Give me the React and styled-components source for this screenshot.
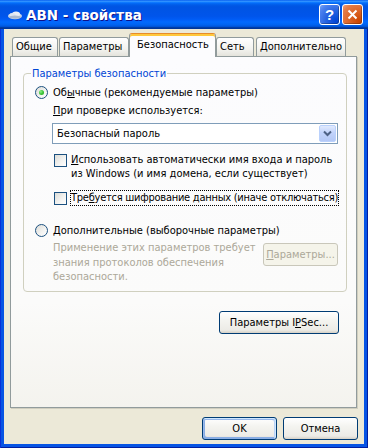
import React from 'react';
import styled, { createGlobalStyle } from 'styled-components';

const GlobalStyle = createGlobalStyle`
  html, body {
    margin: 0;
    padding: 0;
  }
  body {
    font-family: 'DejaVu Sans Condensed', 'DejaVu Sans', Tahoma, sans-serif;
    font-stretch: condensed;
    font-size: 11px;
    color: #000;
  }
`;

const Window = styled.div`
  width: 368px;
  height: 448px;
  display: flex;
  flex-direction: column;
  background: #0754e4;
  box-shadow: inset 1px 0 #0831d9, inset -1px 0 #001ea0, inset 0 -1px #001ea0;
`;

const TitleBar = styled.div`
  height: 29px;
  flex: none;
  display: flex;
  align-items: center;
  padding: 0 5px 0 7px;
  background: linear-gradient(
    180deg,
    #0058ee 0%,
    #3593ff 4%,
    #288eff 6%,
    #127dff 8%,
    #036ffc 10%,
    #0262ee 14%,
    #0057e5 20%,
    #0054e3 24%,
    #0055eb 56%,
    #005bf5 66%,
    #026afe 76%,
    #0062ef 86%,
    #0052d6 92%,
    #0040ab 94%,
    #003092 100%
  );
`;

const TitleText = styled.span`
  flex: 1;
  margin-left: 3px;
  font-family: 'DejaVu Sans', sans-serif;
  font-stretch: normal;
  font-weight: bold;
  font-size: 13.5px;
  color: #fff;
  text-shadow: 1px 1px #0f1089;
`;

const TitleButton = styled.div`
  width: 21px;
  height: 21px;
  box-sizing: border-box;
  margin-left: 2px;
  border: 1px solid #fff;
  border-radius: 3px;
  display: flex;
  align-items: center;
  justify-content: center;
  color: #fff;
  font-family: 'Liberation Sans', Arial, sans-serif;
  font-weight: bold;
  font-size: 15px;
  background: ${p =>
    p.$close
      ? 'radial-gradient(circle at 85% 85%, #cc4600 0%, #dc6527 45%, #e37d4a 80%, #f0a080 100%)'
      : 'radial-gradient(circle at 85% 85%, #0044d6 0%, #2663e0 45%, #4d82ef 80%, #7aa7f8 100%)'};
  box-shadow: inset -1px -1px rgba(0, 0, 0, 0.25);
`;

const Body = styled.div`
  flex: 1;
  display: flex;
  flex-direction: column;
  margin: 0 4px 4px;
  padding: 4px 7px 4px 6px;
  background: #ece9d8;
`;

const TabStrip = styled.div`
  display: flex;
  align-items: flex-end;
  height: 24px;
  padding-left: 2px;
  margin-bottom: -1px;
  position: relative;
  z-index: 1;
`;

const Tab = styled.div`
  box-sizing: border-box;
  width: ${p => p.$w}px;
  height: ${p => (p.$active ? 24 : 19)}px;
  margin-right: ${p => p.$gap}px;
  margin-bottom: ${p => (p.$active ? 0 : 1)}px;
  padding: ${p => (p.$active ? '4px 0 0 7px' : '2px 0 0 3px')};
  border: 1px solid #919b9c;
  border-bottom: none;
  border-radius: 3px 3px 0 0;
  white-space: nowrap;
  background: ${p =>
    p.$active ? '#fcfcfe' : 'linear-gradient(180deg, #ffffff 0%, #f3f3ef 60%, #e4e3dc 100%)'};
  ${p =>
    p.$active &&
    `
    border-top-color: #e68b2c;
    box-shadow: inset 0 2px #ffc83c;
  `}
`;

const Panel = styled.div`
  flex: none;
  height: 352px;
  box-sizing: border-box;
  border: 1px solid #919b9c;
  background: linear-gradient(180deg, #fcfcfe 0%, #fbfbfa 70%, #f4f3ee 100%);
  box-shadow: 1px 1px #d0cebf;
  display: flex;
  flex-direction: column;
  padding: 10px 9px 0 12px;
`;

const GroupBox = styled.fieldset`
  margin: 0;
  min-width: 0;
  height: 225px;
  box-sizing: border-box;
  border: 1px solid #d0d0bf;
  border-radius: 4px;
  padding: 2px 8px 0 11px;
  display: flex;
  flex-direction: column;

  legend {
    color: #0046d5;
    padding: 0 1px;
    margin-left: -4px;
    line-height: 13px;
  }
`;

const RadioRow = styled.label`
  display: flex;
  align-items: center;
  gap: 5px;
  height: 16px;
  margin-top: ${p => p.$top}px;
  white-space: nowrap;
`;

const Radio = styled.span`
  width: 13px;
  height: 13px;
  box-sizing: border-box;
  flex: none;
  border: 1px solid #1c5180;
  border-radius: 50%;
  background: linear-gradient(135deg, #dcdcd7 0%, #f4f4f2 60%, #ffffff 100%);
  display: flex;
  align-items: center;
  justify-content: center;

  &::after {
    content: '';
    display: ${p => (p.$checked ? 'block' : 'none')};
    width: 5px;
    height: 5px;
    border-radius: 50%;
    background: radial-gradient(circle at 35% 35%, #8ef08a 0%, #3bc437 50%, #21a121 100%);
  }
`;

const Indent = styled.div`
  margin-left: 18px;
  display: flex;
  flex-direction: column;
`;

const Caption = styled.div`
  margin-top: ${p => p.$top}px;
  line-height: 14px;
  white-space: nowrap;
`;

const Select = styled.div`
  margin-top: 5px;
  margin-left: -1px;
  height: 21px;
  box-sizing: border-box;
  border: 1px solid #7f9db9;
  background: #fff;
  display: flex;
  align-items: center;
  justify-content: space-between;
  padding: 0 1px 0 4px;
`;

const DropButton = styled.span`
  width: 17px;
  height: 17px;
  box-sizing: border-box;
  border: 1px solid #bad1fc;
  border-radius: 2px;
  background: linear-gradient(180deg, #e1eafe 0%, #c1d3fb 45%, #b4c8f6 100%);
  display: flex;
  align-items: center;
  justify-content: center;
`;

const CheckRow = styled.label`
  display: flex;
  align-items: flex-start;
  gap: 3px;
  margin-top: ${p => p.$top}px;
  margin-left: 1px;
`;

const CheckBox = styled.span`
  width: 13px;
  height: 13px;
  box-sizing: border-box;
  flex: none;
  margin-top: 2px;
  border: 1px solid #1c5180;
  background: linear-gradient(135deg, #dcdcd7 0%, #f4f4f2 60%, #ffffff 100%);
`;

const CheckText = styled.span`
  line-height: 14px;
  padding: 1px;
  white-space: nowrap;
  letter-spacing: ${p => (p.$focus ? '-0.25px' : '0')};
  outline: ${p => (p.$focus ? '1px dotted #000' : 'none')};
  outline-offset: -1px;
`;

const AdvancedRow = styled.div`
  display: flex;
  justify-content: space-between;
  align-items: flex-start;
  margin-top: 3px;
`;

const GrayText = styled.div`
  color: #aca899;
  line-height: 14.5px;
  white-space: nowrap;
`;

const Button = styled.button`
  width: ${p => p.$w || 75}px;
  height: 23px;
  box-sizing: border-box;
  margin-top: ${p => p.$top || 0}px;
  padding: 0;
  font-family: inherit;
  font-stretch: inherit;
  font-size: 11px;
  border: 1px solid ${p => (p.disabled ? '#c9c7ba' : '#003c74')};
  border-radius: 3px;
  color: ${p => (p.disabled ? '#aca899' : '#000')};
  background: ${p =>
    p.disabled
      ? '#f5f4ea'
      : 'linear-gradient(180deg, #ffffff 0%, #f4f4f0 40%, #ecebe6 86%, #d6d0c5 100%)'};
  ${p =>
    p.$default &&
    `box-shadow: inset -1px 1px #cee7ff, inset 1px 2px #98b8ea, inset -2px 2px #bcd4f6, inset 1px -1px #89ade4, inset 2px -2px #89ade4;`}
`;

const IpsecRow = styled.div`
  display: flex;
  justify-content: flex-end;
  margin-top: 19px;
  padding-right: 8px;
`;

const DialogButtons = styled.div`
  display: flex;
  justify-content: flex-end;
  gap: 6px;
  margin-top: 9px;
  margin-right: -1px;
`;

const U = styled.span`
  text-decoration: underline;
`;

const tabs = [
  { label: 'Общие', w: 46, gap: 1 },
  { label: 'Параметры', w: 70, gap: 0 },
  { label: 'Безопасность', w: 87, gap: 0, active: true },
  { label: 'Сеть', w: 38, gap: 2 },
  { label: 'Дополнительно', w: 90, gap: 0 },
];

function NetIcon() {
  return (
    <svg width="16" height="12" viewBox="0 0 16 12">
      <ellipse cx="8" cy="7" rx="7" ry="3.2" fill="#c9d6e8" />
      <ellipse cx="9" cy="5" rx="4" ry="2.6" fill="#e9eef6" />
      <ellipse cx="5.5" cy="6" rx="3" ry="2" fill="#dfe6f0" />
      <ellipse cx="8" cy="8.2" rx="6" ry="1.6" fill="#a9b9d0" />
    </svg>
  );
}

function Chevron() {
  return (
    <svg width="9" height="7" viewBox="0 0 9 7">
      <path d="M1 1.5 L4.5 5 L8 1.5" fill="none" stroke="#4d6185" strokeWidth="2" />
    </svg>
  );
}

function CloseGlyph() {
  return (
    <svg width="11" height="11" viewBox="0 0 11 11">
      <path d="M1.5 1.5 L9.5 9.5 M9.5 1.5 L1.5 9.5" stroke="#fff" strokeWidth="2" />
    </svg>
  );
}

export default function App() {
  return (
    <>
      <GlobalStyle />
      <Window>
        <TitleBar>
          <NetIcon />
          <TitleText>ABN - свойства</TitleText>
          <TitleButton>?</TitleButton>
          <TitleButton $close>
            <CloseGlyph />
          </TitleButton>
        </TitleBar>
        <Body>
          <TabStrip>
            {tabs.map(t => (
              <Tab key={t.label} $w={t.w} $gap={t.gap} $active={t.active}>
                {t.label}
              </Tab>
            ))}
          </TabStrip>
          <Panel>
            <GroupBox>
              <legend>Параметры безопасности</legend>
              <RadioRow $top={2}>
                <Radio $checked />
                <span>
                  Об<U>ы</U>чные (рекомендуемые параметры)
                </span>
              </RadioRow>
              <Indent>
                <Caption $top={4}>
                  <U>П</U>ри проверке используется:
                </Caption>
                <Select>
                  <span>Безопасный пароль</span>
                  <DropButton>
                    <Chevron />
                  </DropButton>
                </Select>
                <CheckRow $top={8}>
                  <CheckBox />
                  <CheckText>
                    <U>И</U>спользовать автоматически имя входа и пароль
                    <br />
                    из Windows (и имя домена, если существует)
                  </CheckText>
                </CheckRow>
                <CheckRow $top={8}>
                  <CheckBox />
                  <CheckText $focus>
                    Тре<U>б</U>уется шифрование данных (иначе отключаться)
                  </CheckText>
                </CheckRow>
              </Indent>
              <RadioRow $top={16}>
                <Radio />
                <span>
                  <U>Д</U>ополнительные (выборочные параметры)
                </span>
              </RadioRow>
              <Indent>
                <AdvancedRow>
                  <GrayText>
                    Применение этих параметров требует
                    <br />
                    знания протоколов обеспечения
                    <br />
                    безопасности.
                  </GrayText>
                  <Button disabled $top={2}>
                    <U>П</U>араметры...
                  </Button>
                </AdvancedRow>
              </Indent>
            </GroupBox>
            <IpsecRow>
              <Button $w={120}>
                Параметры I<U>P</U>Sec...
              </Button>
            </IpsecRow>
          </Panel>
          <DialogButtons>
            <Button $default>OK</Button>
            <Button>Отмена</Button>
          </DialogButtons>
        </Body>
      </Window>
    </>
  );
}
